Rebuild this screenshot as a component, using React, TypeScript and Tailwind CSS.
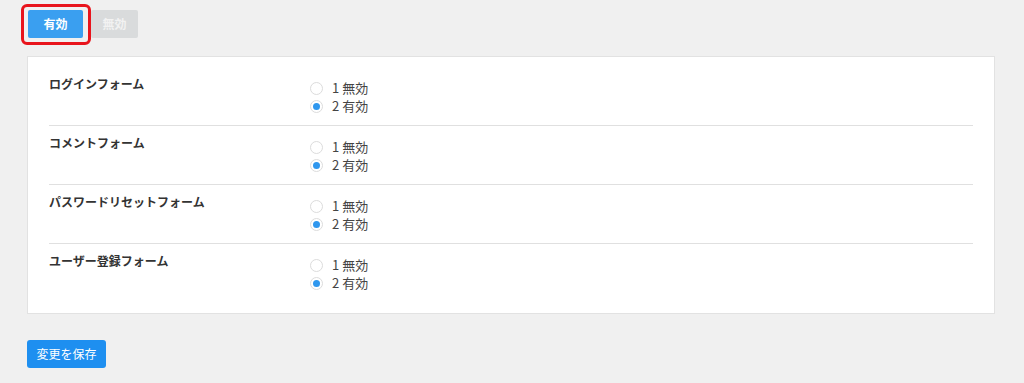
import React from "react";

const rows = ["ログインフォーム", "コメントフォーム", "パスワードリセットフォーム", "ユーザー登録フォーム"];

function Radio({ checked }: { checked?: boolean }) {
  return (
    <span className="w-[13px] h-[13px] rounded-full border border-[#dcdcdc] bg-white flex items-center justify-center shrink-0">
      {checked && <span className="w-[7px] h-[7px] rounded-full bg-[#2f97ee]" />}
    </span>
  );
}

export default function App() {
  return (
    <div
      className="w-[1024px] h-[383px] bg-[#f0f0f0] text-[#333] pt-[10px] pl-[27px] pr-[29px]"
      style={{ fontFamily: '"Noto Sans CJK JP", "Noto Sans", sans-serif' }}
    >
      <div className="flex gap-[8px] pl-[1px]">
        <div className="relative">
          <button className="w-[55px] h-[28px] rounded-[2px] bg-[#3a9ff0] text-white text-[12px] font-bold flex items-center justify-center">
            有効
          </button>
          <span className="absolute -left-[7px] -top-[6px] w-[70px] h-[41px] border-[3px] border-[#e8141c] rounded-[6px]" />
        </div>
        <button className="w-[47px] h-[28px] rounded-[2px] bg-[#d9dbdc] text-[#f2f2f2] text-[12px] font-bold flex items-center justify-center">
          無効
        </button>
      </div>

      <div className="mt-[18px] bg-white border border-[#e2e2e2] px-[21px] py-[10px]">
        {rows.map((label, i) => (
          <div
            key={label}
            className={`flex h-[59px] pt-[10px] ${i < rows.length - 1 ? "border-b border-[#e0e0e0]" : ""}`}
          >
            <div className="w-[261px] text-[12px] font-bold leading-[14px] text-[#333]">{label}</div>
            <div className="flex flex-col pt-[2px]">
              <label className="flex items-center h-[18px] text-[13px] text-[#444]">
                <Radio />
                <span className="ml-[9px] whitespace-pre">1 無効</span>
              </label>
              <label className="flex items-center h-[18px] text-[13px] text-[#444]">
                <Radio checked />
                <span className="ml-[9px] whitespace-pre">2 有効</span>
              </label>
            </div>
          </div>
        ))}
      </div>

      <button className="mt-[26px] w-[79px] h-[28px] rounded-[3px] bg-[#1e8ff0] text-white text-[12px] flex items-center justify-center">
        変更を保存
      </button>
    </div>
  );
}
